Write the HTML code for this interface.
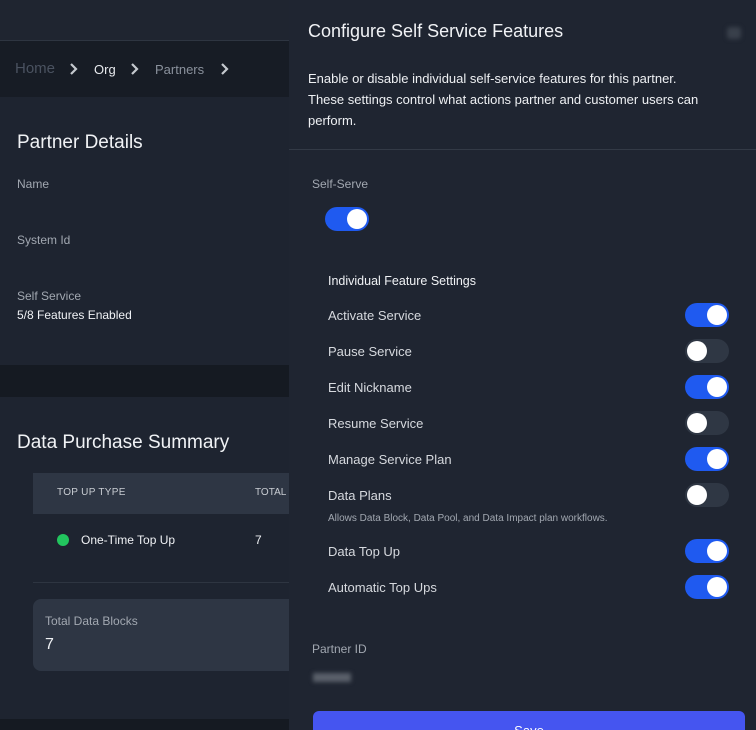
<!DOCTYPE html>
<html><head><style>
*{margin:0;padding:0;box-sizing:border-box}
html{width:756px;height:730px;overflow:hidden}
body{width:756px;height:730px;overflow:hidden;background:#1e2430;font-family:"Liberation Sans",sans-serif;position:relative;color:#e8eaee}
.a{position:absolute;white-space:nowrap}
.tg{position:absolute;width:44px;height:24px;border-radius:12px;background:#1f5af0}
.tg::after{content:"";position:absolute;top:2px;left:22px;width:20px;height:20px;border-radius:50%;background:#fff}
.tg.off{background:#2f3744}
.tg.off::after{left:2px}
.lbl{font-size:13px;color:#d6d9de}
.ch{position:absolute;width:10px;height:14px}
</style></head><body>
<div class="a" style="left:0;top:0;width:289px;height:41px;background:#1f2530;border-bottom:1px solid #2e3541"></div>
<div class="a" style="left:0;top:41px;width:289px;height:56px;background:#171c25"></div>
<div class="a" style="left:15px;top:60px;font-size:15px;color:#4a5260">Home</div>
<svg class="ch" style="left:69px;top:62px" viewBox="0 0 10 14"><path d="M2 2l5 5-5 5" stroke="#c4c8ce" stroke-width="2.2" fill="none"/></svg>
<div class="a" style="left:94px;top:62px;font-size:13px;color:#e8eaee">Org</div>
<svg class="ch" style="left:130px;top:62px" viewBox="0 0 10 14"><path d="M2 2l5 5-5 5" stroke="#c4c8ce" stroke-width="2.2" fill="none"/></svg>
<div class="a" style="left:155px;top:62px;font-size:13px;color:#8a919c">Partners</div>
<svg class="ch" style="left:220px;top:62px" viewBox="0 0 10 14"><path d="M2 2l5 5-5 5" stroke="#c4c8ce" stroke-width="2.2" fill="none"/></svg>
<div class="a" style="left:17px;top:132px;font-size:19px;color:#f0f2f5">Partner Details</div>
<div class="a" style="left:17px;top:177px;font-size:12px;color:#a2a8b1">Name</div>
<div class="a" style="left:17px;top:233px;font-size:12px;color:#a2a8b1">System Id</div>
<div class="a" style="left:17px;top:289px;font-size:12px;color:#a2a8b1">Self Service</div>
<div class="a" style="left:17px;top:308px;font-size:12px;color:#f0f2f5">5/8 Features Enabled</div>
<div class="a" style="left:0;top:365px;width:289px;height:32px;background:#151a22"></div>
<div class="a" style="left:17px;top:432px;font-size:19px;color:#f0f2f5">Data Purchase Summary</div>
<div class="a" style="left:33px;top:473px;width:256px;height:41px;background:#2e3644"></div>
<div class="a" style="left:57px;top:487px;font-size:10px;color:#c9cdd3;letter-spacing:.3px">TOP UP TYPE</div>
<div class="a" style="left:255px;top:487px;font-size:10px;color:#c9cdd3">TOTAL</div>
<div class="a" style="left:57px;top:534px;width:12px;height:12px;border-radius:50%;background:#22c55e"></div>
<div class="a" style="left:81px;top:533px;font-size:12px;color:#f0f2f5">One-Time Top Up</div>
<div class="a" style="left:255px;top:533px;font-size:12px;color:#f0f2f5">7</div>
<div class="a" style="left:33px;top:582px;width:256px;height:1px;background:#2e3541"></div>
<div class="a" style="left:33px;top:599px;width:256px;height:72px;background:#2e3644;border-radius:8px 0 0 8px"></div>
<div class="a" style="left:45px;top:614px;font-size:12px;color:#a2a8b1">Total Data Blocks</div>
<div class="a" style="left:45px;top:636px;font-size:16px;color:#f0f2f5">7</div>
<div class="a" style="left:0;top:719px;width:289px;height:11px;background:#151a22"></div>

<div class="a" style="left:289px;top:0;width:467px;height:730px;background:#1f2531;overflow:hidden">
<div class="a" style="left:19px;top:21px;font-size:18px;color:#f0f2f5">Configure Self Service Features</div>
<div class="a" style="left:438px;top:27px;width:14px;height:12px;background:#39404b;border-radius:3px;filter:blur(2px)"></div>
<div class="a" style="left:19px;top:68px;font-size:13px;line-height:21px;color:#eef0f3;white-space:normal;width:400px">Enable or disable individual self-service features for this partner. These settings control what actions partner and customer users can perform.</div>
<div class="a" style="left:0;top:149px;width:467px;height:1px;background:#333a46"></div>
<div class="a" style="left:23px;top:177px;font-size:12px;color:#a2a8b1">Self-Serve</div>
<div class="tg" style="left:36px;top:207px"></div>
<div class="a" style="left:39px;top:274px;font-size:12.5px;color:#f0f2f5">Individual Feature Settings</div>
<div class="a lbl" style="left:39px;top:308px">Activate Service</div><div class="tg" style="left:396px;top:303px"></div>
<div class="a lbl" style="left:39px;top:344px">Pause Service</div><div class="tg off" style="left:396px;top:339px"></div>
<div class="a lbl" style="left:39px;top:380px">Edit Nickname</div><div class="tg" style="left:396px;top:375px"></div>
<div class="a lbl" style="left:39px;top:416px">Resume Service</div><div class="tg off" style="left:396px;top:411px"></div>
<div class="a lbl" style="left:39px;top:452px">Manage Service Plan</div><div class="tg" style="left:396px;top:447px"></div>
<div class="a lbl" style="left:39px;top:488px">Data Plans</div><div class="tg off" style="left:396px;top:483px"></div>
<div class="a" style="left:39px;top:513px;font-size:10px;color:#a2a8b1">Allows Data Block, Data Pool, and Data Impact plan workflows.</div>
<div class="a lbl" style="left:39px;top:544px">Data Top Up</div><div class="tg" style="left:396px;top:539px"></div>
<div class="a lbl" style="left:39px;top:580px">Automatic Top Ups</div><div class="tg" style="left:396px;top:575px"></div>
<div class="a" style="left:23px;top:642px;font-size:12px;color:#a2a8b1">Partner ID</div>
<div class="a" style="left:24px;top:673px;width:38px;height:9px;background:#5a606a;filter:blur(2px)"></div>
<div class="a" style="left:24px;top:711px;width:432px;height:30px;background:#4555f0;border-radius:6px;text-align:center;color:#fff;font-size:13px;padding-top:12px">Save</div>
</div>
</body></html>
